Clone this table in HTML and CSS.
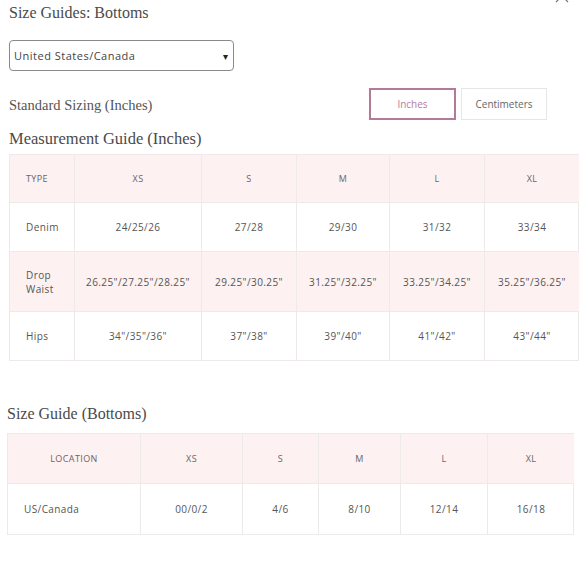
FILE: index.html
```html
<!DOCTYPE html>
<html>
<head>
<meta charset="utf-8">
<link rel="stylesheet" href="styles.css">
</head>
<body>
<div class="page">
  <svg class="corner" width="16" height="6" viewBox="0 0 16 6"><path d="M2 4 L5 1 M11 1 L14 4" stroke="#777" stroke-width="1.2" fill="none"/></svg>
  <h1 class="title">Size Guides: Bottoms</h1>
  <div class="select">
    <span>United States/Canada</span>
    <span class="arrow">&#9662;</span>
  </div>
  <div class="sizing-row">
    <h2 class="sub">Standard Sizing (Inches)</h2>
    <div class="toggles">
      <div class="btn active">Inches</div>
      <div class="btn">Centimeters</div>
    </div>
  </div>
  <h2 class="title guide">Measurement Guide (Inches)</h2>
  <div class="grid g1">
    <div class="c hd left">TYPE</div><div class="c hd">XS</div><div class="c hd">S</div><div class="c hd">M</div><div class="c hd">L</div><div class="c hd">XL</div>
    <div class="c left">Denim</div><div class="c">24/25/26</div><div class="c">27/28</div><div class="c">29/30</div><div class="c">31/32</div><div class="c">33/34</div>
    <div class="c left pink">Drop<br>Waist</div><div class="c pink">26.25"/27.25"/28.25"</div><div class="c pink">29.25"/30.25"</div><div class="c pink">31.25"/32.25"</div><div class="c pink">33.25"/34.25"</div><div class="c pink">35.25"/36.25"</div>
    <div class="c left">Hips</div><div class="c">34"/35"/36"</div><div class="c">37"/38"</div><div class="c">39"/40"</div><div class="c">41"/42"</div><div class="c">43"/44"</div>
  </div>
  <h2 class="title bottoms">Size Guide (Bottoms)</h2>
  <div class="grid g2">
    <div class="c hd">LOCATION</div><div class="c hd">XS</div><div class="c hd">S</div><div class="c hd">M</div><div class="c hd">L</div><div class="c hd">XL</div>
    <div class="c left">US/Canada</div><div class="c">00/0/2</div><div class="c">4/6</div><div class="c">8/10</div><div class="c">12/14</div><div class="c">16/18</div>
  </div>
</div>
</body>
</html>
```
FILE: styles.css
```css
* { box-sizing: border-box; }
body { margin: 0; background: #fff; }
.page { position: relative; width: 580px; height: 580px; padding: 0 2px 0 9px; overflow: hidden; font-family: "Open Sans", "Liberation Sans", sans-serif; color: #555; }
.corner { position: absolute; left: 554px; top: -2px; }
.title { margin: 0; font-family: "Liberation Serif", serif; font-weight: normal; font-size: 16px; color: #4a4a4a; line-height: 20px; }
.page > .title:first-of-type { padding-top: 3px; }
.select { margin-top: 17px; width: 225px; height: 31px; border: 1px solid #8a8a8a; border-radius: 4px; display: flex; align-items: center; justify-content: space-between; padding: 0 5px 0 4px; font-size: 11px; color: #444; letter-spacing: 0.5px; }
.arrow { font-size: 10px; color: #222; }
.sizing-row { display: flex; align-items: center; justify-content: space-between; margin-top: 17px; width: 538px; }
.sub { margin: 0; font-family: "Liberation Serif", serif; font-weight: normal; font-size: 14.5px; color: #555; padding-top: 3px; }
.toggles { display: flex; gap: 5px; }
.btn { height: 32px; width: 86px; display: flex; align-items: center; justify-content: center; font-size: 10px; color: #666; border: 1px solid #e6e6e6; }
.btn.active { border: 2px solid #b4789a; color: #b87c9e; width: 87px; }
.guide { margin-top: 6px; font-size: 16.5px; }
.grid { display: grid; border: 1px solid #efeaea; }
.g1 { grid-template-columns: 64px 127px 95px 93px 95px 95px; grid-template-rows: 47px 49px 60px 49px; width: 570px; margin-top: 5px; }
.g2 { grid-template-columns: 132px 102px 76px 82px 87px 87px; grid-template-rows: 49px 51px; width: 567px; margin-left: -2px; margin-top: 9px; }
.c { display: flex; align-items: center; justify-content: center; font-size: 10px; letter-spacing: 0.4px; color: #555; border-left: 1px solid #efeaea; border-top: 1px solid #efeaea; text-align: left; line-height: 14px; }
.c:nth-child(6n+1) { border-left: none; }
.c.hd { background: #fdf1f1; border-top: none; color: #666; font-size: 9px; letter-spacing: 0.4px; }
.c.left { justify-content: flex-start; padding-left: 16px; }
.pink { background: #fdf1f1; }
.bottoms { margin-top: 43px; margin-left: -2px; }
```
